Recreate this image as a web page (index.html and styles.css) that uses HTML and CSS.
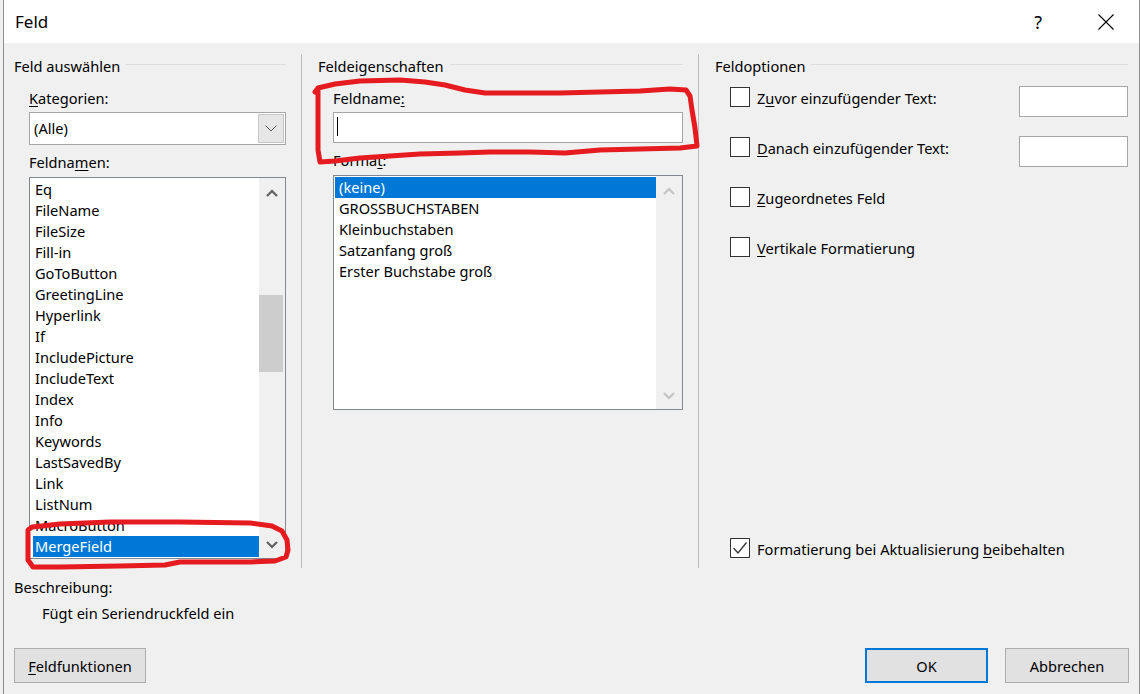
FILE: index.html
```html
<!DOCTYPE html>
<html lang="de">
<head>
<meta charset="utf-8">
<title>Feld</title>
<link rel="stylesheet" href="styles.css">
</head>
<body>
<div class="window">
  <div class="titlebar">
    <span class="title">Feld</span>
    <span class="help">?</span>
    <svg class="close" width="16" height="16" viewBox="0 0 16 16"><path d="M0.5 0.5 L15.5 15.5 M15.5 0.5 L0.5 15.5" stroke="#000" stroke-width="1.1" fill="none"/></svg>
  </div>
  <div class="body">
    <div class="main">
      <section class="col col-left">
        <div class="grp"><span>Feld auswählen</span><i class="grp-line"></i></div>
        <div class="lbl lbl-first ind"><u>K</u>ategorien:</div>
        <div class="combo ind">
          <span class="combo-val">(Alle)</span>
          <span class="combo-btn"><svg width="12" height="7" viewBox="0 0 12 7"><path d="M0.5 0.5 L6 6 L11.5 0.5" stroke="#555" stroke-width="1" fill="none"/></svg></span>
        </div>
        <div class="lbl lbl-next ind">Feldna<u>m</u>en:</div>
        <div class="listbox lb-fields ind">
          <ul class="items">
            <li>Eq</li>
            <li>FileName</li>
            <li>FileSize</li>
            <li>Fill-in</li>
            <li>GoToButton</li>
            <li>GreetingLine</li>
            <li>Hyperlink</li>
            <li>If</li>
            <li>IncludePicture</li>
            <li>IncludeText</li>
            <li>Index</li>
            <li>Info</li>
            <li>Keywords</li>
            <li>LastSavedBy</li>
            <li>Link</li>
            <li>ListNum</li>
            <li>MacroButton</li>
            <li class="sel">MergeField</li>
          </ul>
          <div class="vscroll">
            <div class="sb-btn sb-up"><svg width="12" height="8" viewBox="0 0 12 8"><path d="M1 7 L6 2 L11 7" stroke="#606060" stroke-width="2.2" fill="none"/></svg></div>
            <div class="track"><div class="thumb"></div></div>
            <div class="sb-btn sb-down"><svg width="12" height="8" viewBox="0 0 12 8"><path d="M1 1 L6 6 L11 1" stroke="#606060" stroke-width="2.2" fill="none"/></svg></div>
          </div>
        </div>
      </section>

      <section class="col col-mid">
        <div class="grp"><span>Feldeigenschaften</span><i class="grp-line"></i></div>
        <div class="lbl lbl-first ind">Feldname<u>:</u></div>
        <div class="textbox ind"><span class="caret"></span></div>
        <div class="lbl lbl-next ind">Forma<u>t</u>:</div>
        <div class="listbox lb-format ind">
          <ul class="items">
            <li class="sel">(keine)</li>
            <li>GROSSBUCHSTABEN</li>
            <li>Kleinbuchstaben</li>
            <li>Satzanfang groß</li>
            <li>Erster Buchstabe groß</li>
          </ul>
          <div class="vscroll">
            <div class="sb-btn sb-up"><svg width="12" height="8" viewBox="0 0 12 8"><path d="M1 7 L6 2 L11 7" stroke="#c4c4c4" stroke-width="2.2" fill="none"/></svg></div>
            <div class="track"></div>
            <div class="sb-btn sb-down"><svg width="12" height="8" viewBox="0 0 12 8"><path d="M1 1 L6 6 L11 1" stroke="#c4c4c4" stroke-width="2.2" fill="none"/></svg></div>
          </div>
        </div>
      </section>

      <section class="col col-right">
        <div class="grp"><span>Feldoptionen</span><i class="grp-line"></i></div>
        <div class="opts">
          <div class="opt-row">
            <span class="chk"></span>
            <span class="opt-lbl">Z<u>u</u>vor einzufügender Text:</span>
            <span class="opt-input"></span>
          </div>
          <div class="opt-row">
            <span class="chk"></span>
            <span class="opt-lbl"><u>D</u>anach einzufügender Text:</span>
            <span class="opt-input"></span>
          </div>
          <div class="opt-row">
            <span class="chk"></span>
            <span class="opt-lbl"><u>Z</u>ugeordnetes Feld</span>
          </div>
          <div class="opt-row">
            <span class="chk"></span>
            <span class="opt-lbl"><u>V</u>ertikale Formatierung</span>
          </div>
        </div>
        <div class="opt-row opt-bottom">
          <span class="chk"><svg width="18" height="18" viewBox="0 0 18 18"><path d="M2.5 9 L7 14 L15.5 3.5" stroke="#333" stroke-width="1.3" fill="none"/></svg></span>
          <span class="opt-lbl">Formatierung bei Aktualisierung <u>b</u>eibehalten</span>
        </div>
      </section>
    </div>

    <div class="lbl beschr">Beschreibung:</div>
    <div class="lbl desc-text">Fügt ein Seriendruckfeld ein</div>

    <div class="buttons">
      <div class="btn btn-fk"><span><u>F</u>eldfunktionen</span></div>
      <div class="btn btn-ok">OK</div>
      <div class="btn btn-cancel">Abbrechen</div>
    </div>
  </div>
</div>
<svg class="annot" width="1140" height="694" viewBox="0 0 1140 694">
  <path d="M315 92 L318 88 L335 84 L360 81 L400 80 L425 82 L445 85 L465 90 L485 93 L520 93 L560 93 L600 92 L640 91 L670 89 L686 90 L690 96 L692 110 L695 128 L697 146 L680 148 L640 149 L600 150 L565 153 L530 152 L490 152 L460 153 L420 154 L390 156 L360 158 L335 161 L320 162 L318 150 L318 120 L318 90" />
  <path d="M28 530 L32 527 L60 524 L110 522 L180 522 L250 523 L272 526 L282 531 L287 540 L288 550 L286 557 L275 561 L250 562 L210 562 L180 562 L165 565 L120 566 L60 567 L33 567 L28 560 L28 540 Z" />
</svg>
</body>
</html>
```

FILE: styles.css
```css
* { box-sizing: border-box; }
html, body { margin: 0; padding: 0; }
body {
  position: relative;
  width: 1140px;
  height: 694px;
  overflow: hidden;
  background: #f0f0f0;
  font-family: "Noto Sans", "Open Sans", sans-serif;
  font-size: 14.6px;
  color: #000;
}
u { text-decoration: underline; text-underline-offset: 2px; text-decoration-thickness: 1px; }

.window {
  margin-left: 3px;
  width: 1137px;
  height: 694px;
  border-left: 1px solid #8e8e8e;
  border-right: 1px solid #8e8e8e;
  display: flex;
  flex-direction: column;
}

.titlebar {
  height: 43px;
  flex: none;
  background: #fff;
  display: flex;
  align-items: center;
  padding: 0 25px 0 11px;
}
.title { font-size: 17px; }
.help { margin-left: auto; margin-right: 56px; font-size: 18px; }
.close { display: block; }

.body {
  flex: 1;
  display: flex;
  flex-direction: column;
  padding: 11px 10px 0 10px;
  background: #f0f0f0;
}

.main {
  display: grid;
  grid-template-columns: 287px 397px 430px;
  height: 514px;
}

.col {
  display: flex;
  flex-direction: column;
  padding-top: 2px;
  min-width: 0;
}
.col-left { padding-right: 15px; }
.col-mid { border-left: 1px solid #bdbdbd; padding-left: 16px; padding-right: 15px; }
.col-right { border-left: 1px solid #bdbdbd; padding-left: 16px; }

.grp {
  height: 20px;
  line-height: 20px;
  display: flex;
  align-items: center;
  white-space: nowrap;
}
.grp-line {
  flex: 1;
  height: 1px;
  background: #dcdcdc;
  margin-left: 6px;
  margin-bottom: 4px;
}

.ind { margin-left: 15px; }
.lbl { height: 20px; line-height: 20px; white-space: nowrap; }
.lbl-first { margin-top: 12px; }
.lbl-next { margin-top: 7px; }

.combo {
  margin-top: 4px;
  height: 33px;
  border: 1px solid #a6a6a6;
  background: #fff;
  display: flex;
}
.combo-val { flex: 1; padding-left: 4px; line-height: 31px; }
.combo-btn {
  width: 26px;
  margin: 1px 1px 1px 0;
  border: 1px solid #c6c6c6;
  background: #e6e6e6;
  display: flex;
  align-items: center;
  justify-content: center;
}

.listbox {
  margin-top: 5px;
  border: 1px solid #828790;
  background: #fff;
  display: flex;
  overflow: hidden;
}
.lb-fields { height: 382px; }
.lb-format { height: 235px; }

.items {
  flex: 1;
  list-style: none;
  margin: 0;
  overflow: hidden;
}
.lb-fields .items { padding: 1px 0 0 3px; }
.lb-fields .items li { padding-left: 2px; }
.lb-format .items { padding: 1px 0 0 1px; }
.lb-format .items li { padding-left: 4px; }
.items li {
  height: 21px;
  line-height: 21px;
  white-space: nowrap;
}
.items li.sel { background: #0078d7; color: #fff; }

.vscroll {
  width: 26px;
  flex: none;
  background: #f0f0f0;
  display: flex;
  flex-direction: column;
}
.sb-btn {
  height: 26px;
  display: flex;
  align-items: center;
  justify-content: center;
}
.sb-btn svg { display: block; }
.sb-up { padding-top: 4px; }
.track { flex: 1; }
.thumb {
  margin-top: 91px;
  margin-right: 2px;
  height: 77px;
  background: #cdcdcd;
}

.textbox {
  margin-top: 4px;
  height: 31px;
  border: 1px solid #a6a6a6;
  background: #fff;
  padding: 4px 3px;
  display: flex;
}
.caret { width: 1px; height: 19px; background: #000; }

.opts {
  margin-top: 10px;
  display: flex;
  flex-direction: column;
  gap: 19px;
}
.opt-row {
  height: 31px;
  margin-left: 15px;
  display: flex;
  align-items: flex-start;
}
.chk {
  width: 20px;
  height: 20px;
  margin-top: 1px;
  border: 1px solid #333;
  background: #fff;
  flex: none;
}
.chk svg { display: block; margin: 0; }
.opt-lbl {
  margin-left: 7px;
  margin-top: 1px;
  line-height: 22px;
  white-space: nowrap;
}
.opt-input {
  margin-left: auto;
  width: 109px;
  height: 31px;
  border: 1px solid #a6a6a6;
  background: #fff;
}
.opt-bottom { margin-top: auto; }

.beschr { margin-top: 9px; }
.desc-text { margin-top: 6px; margin-left: 28px; }

.buttons {
  margin-top: 25px;
  display: flex;
  height: 35px;
}
.btn {
  height: 35px;
  background: #e1e1e1;
  border: 1px solid #adadad;
  display: flex;
  align-items: center;
  justify-content: center;
  white-space: nowrap;
}
.btn-fk { width: 132px; }
.btn-ok { margin-left: auto; width: 123px; border: 2px solid #0078d7; }
.btn-cancel { margin-left: 17px; width: 124px; }

.annot {
  position: absolute;
  left: 0;
  top: 0;
  pointer-events: none;
}
.annot path {
  fill: none;
  stroke: #e51b1f;
  stroke-width: 5;
  stroke-linejoin: round;
  stroke-linecap: round;
}
```
